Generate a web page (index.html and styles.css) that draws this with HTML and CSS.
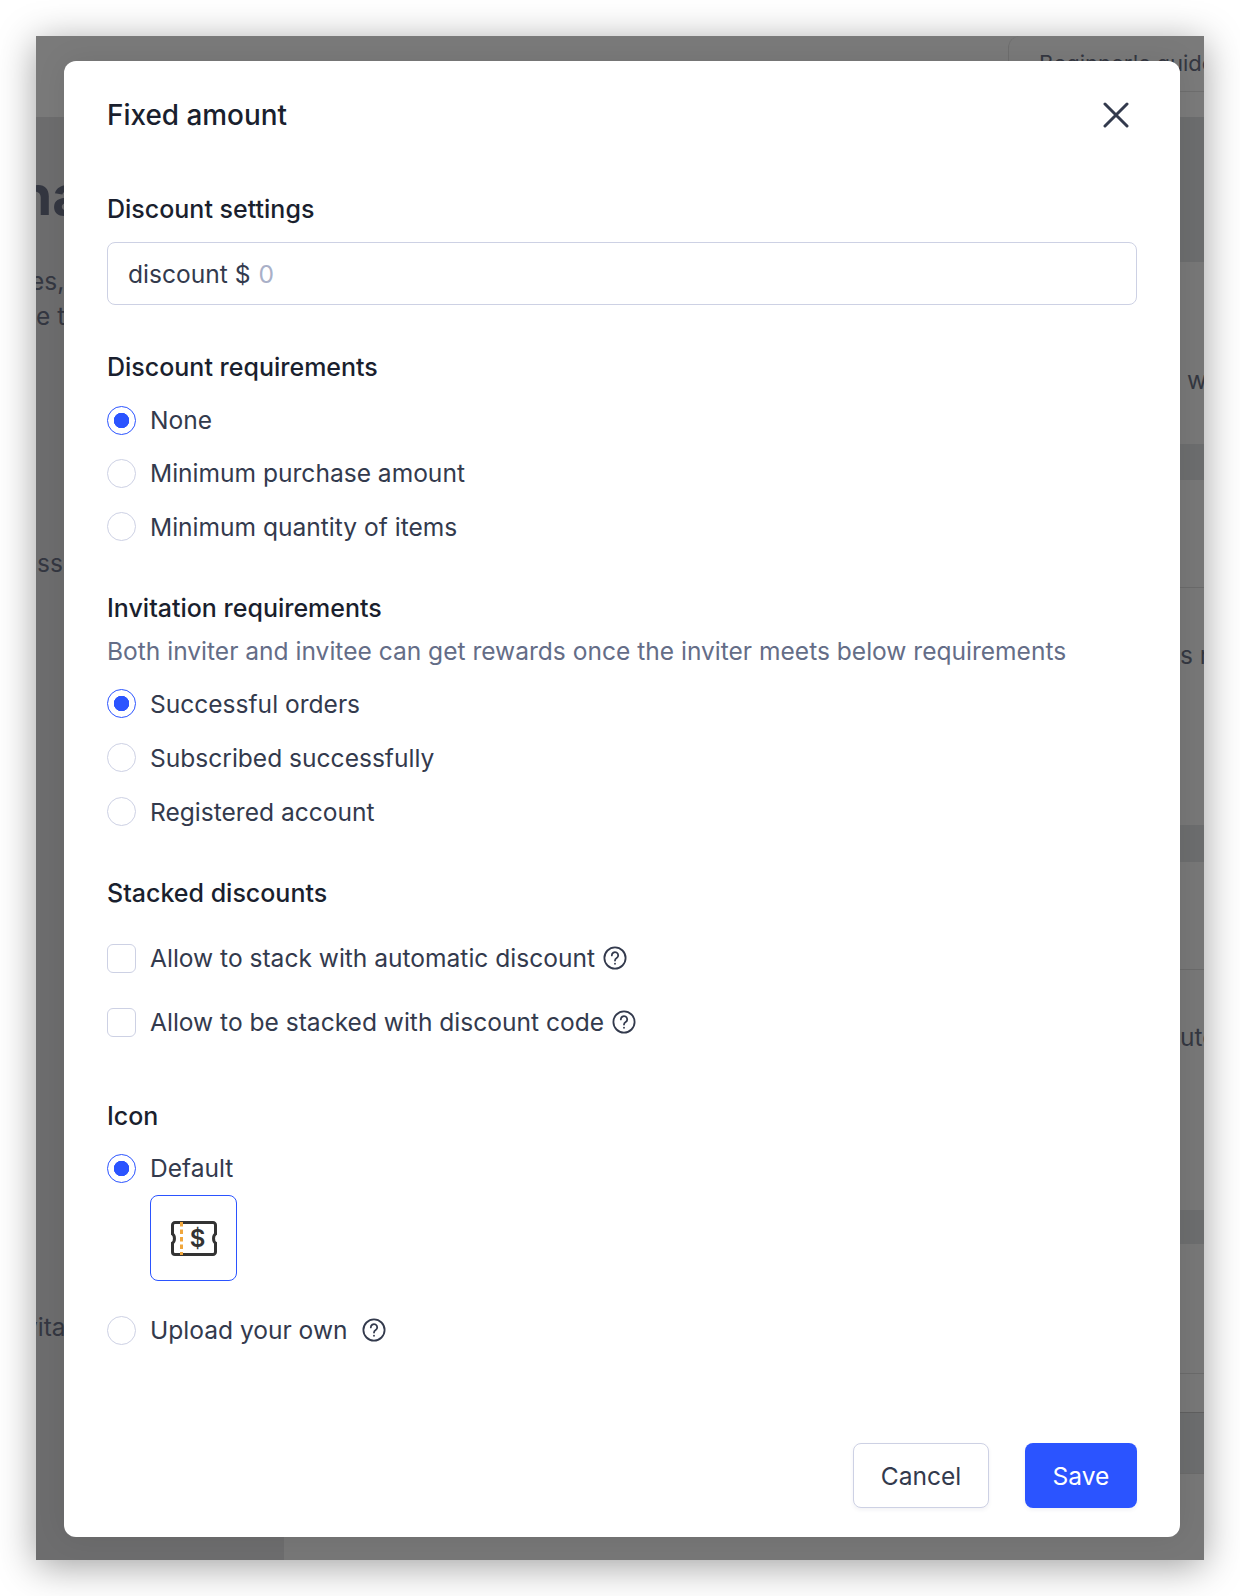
FILE: index.html
```html
<!DOCTYPE html>
<html lang="en">
<head>
    <meta charset="UTF-8" />
    <meta name="viewport" content="width=device-width, initial-scale=1.0" />
    <title>Fixed amount</title>
    <link rel="stylesheet" href="styles.css">
</head>
<body>
    <div class="window">
        <!-- Dimmed page behind the dialog -->
        <div class="page">
            <div class="topbar">
                <div class="guide">Beginner's guide</div>
            </div>
            <div class="main">
                <div class="sidebar">
                    <div class="peek peek-title">na</div>
                    <div class="peek peek-es">es,</div>
                    <div class="peek peek-et">e t</div>
                    <div class="peek peek-ss">ss</div>
                    <div class="peek peek-vita">vita</div>
                </div>
                <div class="content">
                    <div class="band band-dark band-145"></div>
                    <div class="band band-182"><span class="peek-right peek-w">w</span></div>
                    <div class="band band-dark band-36"></div>
                    <div class="band band-108 line-bottom"></div>
                    <div class="band band-237"><span class="peek-right peek-s">s r</span></div>
                    <div class="band band-dark band-37"></div>
                    <div class="band band-108 line-bottom"></div>
                    <div class="band band-240"><span class="peek-right peek-uto">uto</span></div>
                    <div class="band band-dark band-34"></div>
                    <div class="band band-130 line-bottom"></div>
                    <div class="band band-38"></div>
                    <div class="band band-dark band-62 line-top line-bottom"></div>
                    <div class="band band-rest"></div>
                </div>
            </div>
        </div>

        <!-- Dialog -->
        <div class="modal">
            <div class="modal-head">
                <h2 class="modal-title">Fixed amount</h2>
                <button class="close-btn" type="button" aria-label="Close">
                    <svg width="26" height="26" viewBox="0 0 26 26" fill="none" stroke="#333a4d" stroke-width="3" stroke-linecap="round"><path d="M2 2l22 22M24 2L2 24"/></svg>
                </button>
            </div>

            <div class="section section-settings">
                <div class="label">Discount settings</div>
                <label class="amount-box">
                    <span>discount $</span>
                    <input class="amount-input" type="text" placeholder="0">
                </label>
            </div>

            <div class="section section-discount">
                <div class="label">Discount requirements</div>
                <div class="options">
                    <label class="option"><input type="radio" name="discount" checked> None</label>
                    <label class="option"><input type="radio" name="discount"> Minimum purchase amount</label>
                    <label class="option"><input type="radio" name="discount"> Minimum quantity of items</label>
                </div>
            </div>

            <div class="section section-invite">
                <div class="label">Invitation requirements</div>
                <p class="hint">Both inviter and invitee can get rewards once the inviter meets below requirements</p>
                <div class="options options-invite">
                    <label class="option"><input type="radio" name="invite" checked> Successful orders</label>
                    <label class="option"><input type="radio" name="invite"> Subscribed successfully</label>
                    <label class="option"><input type="radio" name="invite"> Registered account</label>
                </div>
            </div>

            <div class="section section-stack">
                <div class="label">Stacked discounts</div>
                <div class="options options-wide">
                    <label class="option"><input type="checkbox"> Allow to stack with automatic discount
                        <svg class="help" viewBox="0 0 24 24" fill="none" stroke="#333a4d" stroke-width="1.8" stroke-linecap="round"><circle cx="12" cy="12" r="10.6"/><path d="M8.8 9.4a3.2 3.2 0 1 1 4.9 2.7c-1.1.7-1.7 1.3-1.7 2.5"/><path d="M12 17.6v.2"/></svg>
                    </label>
                    <label class="option"><input type="checkbox"> Allow to be stacked with discount code
                        <svg class="help" viewBox="0 0 24 24" fill="none" stroke="#333a4d" stroke-width="1.8" stroke-linecap="round"><circle cx="12" cy="12" r="10.6"/><path d="M8.8 9.4a3.2 3.2 0 1 1 4.9 2.7c-1.1.7-1.7 1.3-1.7 2.5"/><path d="M12 17.6v.2"/></svg>
                    </label>
                </div>
            </div>

            <div class="section section-icon">
                <div class="label">Icon</div>
                <label class="option option-default"><input type="radio" name="icon" checked> Default</label>
                <div class="icon-box">
                    <svg width="46" height="35" viewBox="0 0 46 35" fill="none">
                        <path d="M4 1.5h38a2.5 2.5 0 0 1 2.5 2.5v9c-2.6 1.5-2.6 7.5 0 9v9a2.5 2.5 0 0 1-2.5 2.5H4A2.5 2.5 0 0 1 1.5 31v-9c2.6-1.5 2.6-7.5 0-9V4A2.5 2.5 0 0 1 4 1.5z" stroke="#333" stroke-width="3"/>
                        <path d="M10.5 1v33" stroke="#f0a63c" stroke-width="3" stroke-dasharray="4.5 3"/>
                        <text class="ticket-dollar" x="26.5" y="26" text-anchor="middle">$</text>
                    </svg>
                </div>
                <label class="option option-upload"><input type="radio" name="icon"> Upload your own
                    <svg class="help help-upload" viewBox="0 0 24 24" fill="none" stroke="#333a4d" stroke-width="1.8" stroke-linecap="round"><circle cx="12" cy="12" r="10.6"/><path d="M8.8 9.4a3.2 3.2 0 1 1 4.9 2.7c-1.1.7-1.7 1.3-1.7 2.5"/><path d="M12 17.6v.2"/></svg>
                </label>
            </div>

            <div class="modal-foot">
                <button class="btn btn-cancel" type="button">Cancel</button>
                <button class="btn btn-save" type="button">Save</button>
            </div>
        </div>
    </div>
</body>
</html>
```

FILE: styles.css
```css
/* Page and outer window */
* {
    box-sizing: border-box;
}

body {
    margin: 0;
    padding: 36px;
    background: #fff;
    font-family: Inter, "Liberation Sans", sans-serif;
    color: #333a4d;
}

.window {
    position: relative;
    width: 1168px;
    height: 1524px;
    box-shadow: 0 6px 36px rgba(0, 0, 0, 0.38);
}

/* Dimmed page */
.page {
    display: flex;
    flex-direction: column;
    width: 100%;
    height: 100%;
    overflow: hidden;
    background: #777;
    color: #343741;
    font-size: 24.5px;
}

.topbar {
    display: flex;
    justify-content: flex-end;
    height: 81px;
    flex: none;
    background: #7a7a7a;
}

.guide {
    width: 196px;
    height: 56px;
    padding: 12px 0 0 30px;
    border-left: 1px solid #6e6e6e;
    border-bottom: 1px solid #6e6e6e;
    border-top-left-radius: 12px;
    font-size: 22px;
    line-height: 30px;
    white-space: nowrap;
}

.main {
    display: flex;
    flex: 1;
}

.sidebar {
    width: 248px;
    flex: none;
    background: #6d6d6e;
}

.peek {
    width: 28px;
    height: 36px;
    overflow: hidden;
    line-height: 36px;
    white-space: nowrap;
}

.peek-title {
    height: 70px;
    margin-top: 43px;
    font-size: 55px;
    font-weight: 700;
    line-height: 70px;
    text-indent: -18px;
}

.peek-es { margin-top: 33px; text-indent: -6px; }
.peek-et { margin-top: -1px; }
.peek-ss { margin-top: 211px; text-indent: 1px; }
.peek-vita { margin-top: 728px; text-indent: -12px; }

.content {
    display: flex;
    flex: 1;
    flex-direction: column;
}

.band {
    display: flex;
    justify-content: flex-end;
    overflow: hidden;
    flex: none;
}

.band-dark { background: #6c6d6e; }
.line-bottom { border-bottom: 1px solid #6a6a6a; }
.line-top { border-top: 1px solid #5f5f5f; }

.band-34 { height: 34px; }
.band-36 { height: 36px; }
.band-37 { height: 37px; }
.band-38 { height: 38px; }
.band-62 { height: 62px; }
.band-108 { height: 108px; }
.band-130 { height: 130px; }
.band-145 { height: 145px; }
.band-182 { height: 182px; }
.band-237 { height: 237px; }
.band-240 { height: 240px; }
.band-rest { flex: 1; }

.peek-right {
    width: 24px;
    overflow: hidden;
    white-space: nowrap;
    line-height: 36px;
}

.peek-w { margin-top: 100px; padding-left: 7px; }
.peek-s { margin-top: 49px; }
.peek-uto { margin-top: 49px; }

/* Dialog */
.modal {
    position: absolute;
    top: 25px;
    left: 28px;
    display: flex;
    flex-direction: column;
    width: 1116px;
    height: 1476px;
    padding: 38px 43px 29px;
    background: #fff;
    border-radius: 12px;
    box-shadow: 0 0 30px rgba(0, 0, 0, 0.08);
    font-size: 24.55px;
}

.modal-head {
    display: flex;
    align-items: center;
    justify-content: space-between;
    height: 32px;
}

.modal-title {
    margin: 0;
    font-size: 27.9px;
    font-weight: 500;
    line-height: 32px;
    color: #1a1f2e;
}

.close-btn {
    display: flex;
    width: 26px;
    height: 26px;
    margin-right: 8px;
    padding: 0;
    border: none;
    background: none;
}

.section {
    display: flex;
    flex-direction: column;
    align-items: flex-start;
}

.section-settings { margin-top: 63px; }
.section-discount { margin-top: 47px; }
.section-invite { margin-top: 51px; }
.section-stack { margin-top: 51.6px; }
.section-icon { margin-top: 64px; }

.label {
    font-size: 25px;
    font-weight: 500;
    line-height: 30px;
    color: #1a1f2e;
}

.amount-box {
    display: flex;
    align-items: center;
    gap: 8px;
    width: 100%;
    height: 63px;
    margin-top: 18px;
    padding: 0 20px;
    border: 1px solid #cdd1e4;
    border-radius: 8px;
}

.amount-input {
    flex: 1;
    padding: 0;
    border: none;
    outline: none;
    font: inherit;
    color: #333a4d;
}

.amount-input::placeholder {
    color: #a9b0c8;
}

.options {
    display: flex;
    flex-direction: column;
    gap: 23.3px;
    margin-top: 23px;
}

.options-invite {
    gap: 24px;
}

.options-wide {
    gap: 34px;
    margin-top: 35px;
}

.hint {
    margin: 13px 0 0;
    line-height: 30px;
    color: #646d87;
}

.option {
    display: flex;
    align-items: center;
    gap: 14px;
    height: 30px;
    line-height: 30px;
    white-space: nowrap;
}

.option input {
    flex: none;
    width: 29px;
    height: 29px;
    margin: 0;
    appearance: none;
    border: 1px solid #cdd1e4;
    background: #fff;
}

.option input[type="radio"] {
    border-radius: 50%;
}

.option input[type="checkbox"] {
    border-radius: 6px;
}

.option input[type="radio"]:checked {
    border: 1.5px solid #2b54ff;
    background: radial-gradient(circle, #2b54ff 0, #2b54ff 7.5px, #fff 8px);
}

.help {
    width: 24px;
    height: 24px;
    flex: none;
    margin-left: -6px;
}

.help-upload {
    margin-left: 1px;
}

.option-default {
    margin-top: 22px;
}

.icon-box {
    display: flex;
    align-items: center;
    justify-content: center;
    width: 87px;
    height: 86px;
    margin: 12px 0 0 43px;
    border: 1.5px solid #2b54ff;
    border-radius: 8px;
}

.ticket-dollar {
    font-family: Inter, "Liberation Sans", sans-serif;
    font-size: 24px;
    font-weight: 600;
    fill: #333;
}

.option-upload {
    margin-top: 34px;
}

.modal-foot {
    display: flex;
    justify-content: flex-end;
    gap: 36px;
    margin-top: auto;
}

.btn {
    height: 65px;
    border-radius: 8px;
    font: inherit;
    box-shadow: 0 2px 4px rgba(30, 40, 90, 0.06);
}

.btn-cancel {
    width: 136px;
    border: 1px solid #cdd1e4;
    background: #fff;
    color: #333a4d;
}

.btn-save {
    width: 112px;
    border: none;
    background: #2b54ff;
    color: #fff;
}
```
